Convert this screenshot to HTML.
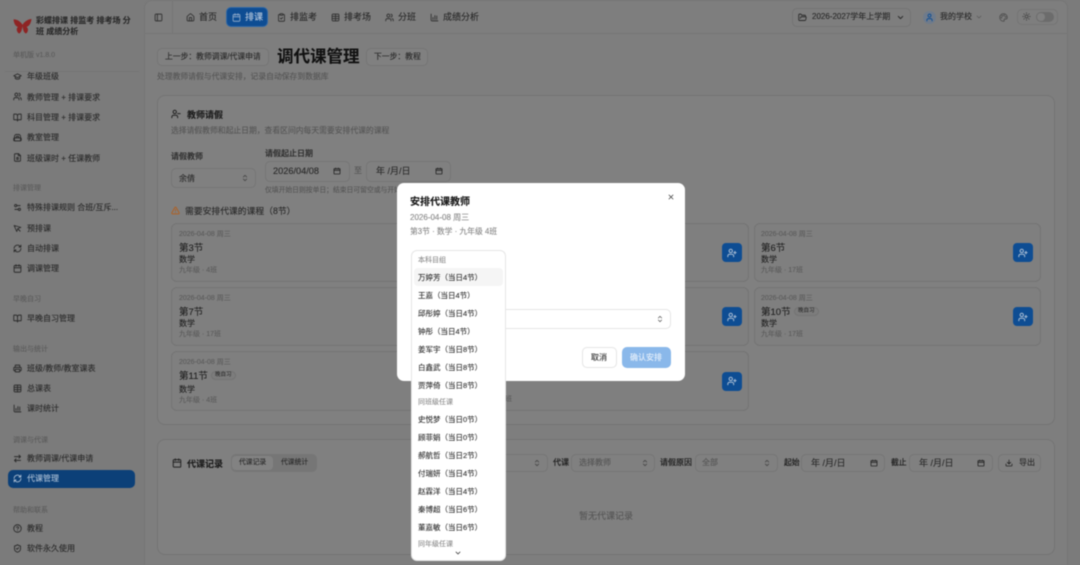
<!DOCTYPE html>
<html lang="zh-CN"><head><meta charset="utf-8"><title>调代课管理</title>
<style>
html,body{margin:0;padding:0;width:1080px;height:565px;overflow:hidden;background:#7b7b7b}
body{font-family:"Liberation Sans","Noto Sans CJK SC",sans-serif;position:relative;color:#2c2c2c}
#r{position:absolute;left:0;top:0;width:1080px;height:565px;overflow:hidden;filter:blur(.45px)}
.t{position:absolute;white-space:nowrap;line-height:12px;height:12px;font-size:8px;margin-top:1px;-webkit-text-stroke:.12px currentColor}
.b{position:absolute;box-sizing:border-box}
svg.i{position:absolute;fill:none;stroke:currentColor;stroke-width:2.4;stroke-linecap:round;stroke-linejoin:round;overflow:visible}
.s{color:#2a2a2a}.m{color:#565656}.l{color:#5c5c5c;font-size:7px}
.side{color:#2b2b2b}
.ctl{border:1px solid #757575;border-radius:5px;background:#808080}
.card{border:1px solid #747474;border-radius:6px;background:#7f7f7f}
.asg{background:#0e4d93;border-radius:4px;width:20px;height:19px;color:#a9bdd4}
.bd{border:1px solid #737373;background:#7c7c7c;border-radius:5px;font-size:5.500px;line-height:7px;height:7px;padding:0 3px;color:#222;position:absolute;white-space:nowrap;box-sizing:content-box}
.di{font-size:7.500px;color:#333;left:418px}
.dl{font-size:7px;color:#8f8f8f;left:418px}
</style></head><body>
<svg width="0" height="0" style="position:absolute"><defs>
<symbol id="pn" viewBox="0 0 24 24"><rect x="3" y="3" width="18" height="18" rx="2"/><path d="M9 3v18"/></symbol>
<symbol id="hm" viewBox="0 0 24 24"><path d="M15 21v-8a1 1 0 0 0-1-1h-4a1 1 0 0 0-1 1v8"/><path d="M3 10a2 2 0 0 1 .7-1.500l7-6a2 2 0 0 1 2.600 0l7 6a2 2 0 0 1 .7 1.500v9a2 2 0 0 1-2 2H5a2 2 0 0 1-2-2z"/></symbol>
<symbol id="cal" viewBox="0 0 24 24"><path d="M8 2v4M16 2v4"/><rect x="3" y="4" width="18" height="18" rx="2"/><path d="M3 10h18"/></symbol>
<symbol id="cl" viewBox="0 0 24 24"><rect x="8" y="2" width="8" height="4" rx="1"/><path d="M16 4h2a2 2 0 0 1 2 2v14a2 2 0 0 1-2 2H6a2 2 0 0 1-2-2V6a2 2 0 0 1 2-2h2"/><path d="m9 14 2 2 4-4"/></symbol>
<symbol id="tb" viewBox="0 0 24 24"><rect x="3" y="3" width="18" height="18" rx="2"/><path d="M3 9h18M3 15h18M12 3v18"/></symbol>
<symbol id="us" viewBox="0 0 24 24"><path d="M16 21v-2a4 4 0 0 0-4-4H6a4 4 0 0 0-4 4v2"/><circle cx="9" cy="7" r="4"/><path d="M22 21v-2a4 4 0 0 0-3-3.900M16 3.100a4 4 0 0 1 0 7.800"/></symbol>
<symbol id="ch" viewBox="0 0 24 24"><path d="M3 3v16a2 2 0 0 0 2 2h16"/><path d="M8 17v-5M13 17V7M18 17v-9"/></symbol>
<symbol id="fd" viewBox="0 0 24 24"><path d="m6 14 1.500-2.900A2 2 0 0 1 9.200 10H20a2 2 0 0 1 1.900 2.500l-1.500 6A2 2 0 0 1 18.500 20H4a2 2 0 0 1-2-2V5a2 2 0 0 1 2-2h4l2 3h8a2 2 0 0 1 2 2v2"/></symbol>
<symbol id="dn" viewBox="0 0 24 24"><path d="m6 9 6 6 6-6"/></symbol>
<symbol id="ud" viewBox="0 0 24 24"><path d="m7 15 5 5 5-5M7 9l5-5 5 5"/></symbol>
<symbol id="u1" viewBox="0 0 24 24"><path d="M19 21v-2a4 4 0 0 0-4-4H9a4 4 0 0 0-4 4v2"/><circle cx="12" cy="7" r="4"/></symbol>
<symbol id="pl" viewBox="0 0 24 24"><path d="M12 22a10 10 0 1 1 10-10c0 2.800-2.200 4-4 4h-2.500a2 2 0 0 0-1.500 3.300c.6.800 0 2.700-2 2.700z"/><circle cx="13.500" cy="6.500" r="1"/><circle cx="17.500" cy="10.500" r="1"/><circle cx="6.500" cy="12.500" r="1"/><circle cx="8.500" cy="7.500" r="1"/></symbol>
<symbol id="sn" viewBox="0 0 24 24"><circle cx="12" cy="12" r="4"/><path d="M12 2v2M12 20v2M4.900 4.900l1.400 1.400M17.700 17.700l1.400 1.400M2 12h2M20 12h2M6.300 17.700l-1.400 1.400M19.100 4.900l-1.400 1.400"/></symbol>
<symbol id="gr" viewBox="0 0 24 24"><path d="M22 10 12 5 2 10l10 5 10-5z"/><path d="M6 12v5c3 3 9 3 12 0v-5"/></symbol>
<symbol id="bk" viewBox="0 0 24 24"><path d="M12 7v14"/><path d="M3 18a1 1 0 0 1-1-1V4a1 1 0 0 1 1-1h5a4 4 0 0 1 4 4 4 4 0 0 1 4-4h5a1 1 0 0 1 1 1v13a1 1 0 0 1-1 1h-6a3 3 0 0 0-3 3 3 3 0 0 0-3-3z"/></symbol>
<symbol id="sc" viewBox="0 0 24 24"><path d="M4 19V9a5 5 0 0 1 5-5h6a5 5 0 0 1 5 5v10"/><rect x="2" y="13" width="20" height="8" rx="2"/><path d="M9 13V9h6v4"/></symbol>
<symbol id="fl" viewBox="0 0 24 24"><path d="M15 2H6a2 2 0 0 0-2 2v16a2 2 0 0 0 2 2h12a2 2 0 0 0 2-2V7z"/><path d="M14 2v5h6"/><path d="M10 12h4v5h-4z"/></symbol>
<symbol id="sl" viewBox="0 0 24 24"><path d="M14 17H5M19 7h-9"/><circle cx="17" cy="17" r="3"/><circle cx="7" cy="7" r="3"/></symbol>
<symbol id="pt" viewBox="0 0 24 24"><path d="M3 4l18 5-8 3-3 8z"/><path d="M13 13l6 6"/></symbol>
<symbol id="rf" viewBox="0 0 24 24"><path d="M3 12a9 9 0 0 1 15-6.700L21 8M21 3v5h-5M21 12a9 9 0 0 1-15 6.700L3 16M3 21v-5h5"/></symbol>
<symbol id="pr" viewBox="0 0 24 24"><path d="M6 18H4a2 2 0 0 1-2-2v-5a2 2 0 0 1 2-2h16a2 2 0 0 1 2 2v5a2 2 0 0 1-2 2h-2"/><path d="M6 9V3h12v6"/><rect x="6" y="14" width="12" height="7"/></symbol>
<symbol id="ar" viewBox="0 0 24 24"><path d="m16 3 4 4-4 4M20 7H4M8 21l-4-4 4-4M4 17h16"/></symbol>
<symbol id="hp" viewBox="0 0 24 24"><circle cx="12" cy="12" r="10"/><path d="M9.100 9a3 3 0 0 1 5.800 1c0 2-3 3-3 3M12 17h.01"/></symbol>
<symbol id="sd" viewBox="0 0 24 24"><path d="M20 13c0 5-3.500 7.500-7.700 9a1 1 0 0 1-.6 0C7.500 20.500 4 18 4 13V6a1 1 0 0 1 1-1c2 0 4.500-1.200 6.200-2.700a1.200 1.200 0 0 1 1.600 0C14.500 3.800 17 5 19 5a1 1 0 0 1 1 1z"/><path d="m9 12 2 2 4-4"/></symbol>
<symbol id="ua" viewBox="0 0 24 24"><path d="M16 21v-2a4 4 0 0 0-4-4H6a4 4 0 0 0-4 4v2"/><circle cx="9" cy="7" r="4"/><path d="M19 8v6M22 11h-6"/></symbol>
<symbol id="um" viewBox="0 0 24 24"><path d="M16 21v-2a4 4 0 0 0-4-4H6a4 4 0 0 0-4 4v2"/><circle cx="9" cy="7" r="4"/><path d="M22 11h-6"/></symbol>
<symbol id="wr" viewBox="0 0 24 24"><path d="m21.700 18-8-14a2 2 0 0 0-3.500 0l-8 14A2 2 0 0 0 4 21h16a2 2 0 0 0 1.700-3z"/><path d="M12 9v4M12 17h.01"/></symbol>
<symbol id="dt" viewBox="0 0 24 24"><rect x="3" y="5" width="18" height="16" rx="1"/><path d="M3 10h18M8 3v3M16 3v3"/></symbol>
<symbol id="ex" viewBox="0 0 24 24"><path d="M21 15v4a2 2 0 0 1-2 2H5a2 2 0 0 1-2-2v-4M7 10l5 5 5-5M12 15V3"/></symbol>
<symbol id="x" viewBox="0 0 24 24"><path d="M18 6 6 18M6 6l12 12"/></symbol>
</defs></svg>
<div id="r">

<!-- main surface -->
<div class="b" style="left:144px;top:0;width:924px;height:565px;background:#7e7e7e;border:1px solid #767676;border-top-right-radius:8px;border-top-left-radius:8px;border-bottom:0"></div>
<div class="b" style="left:145px;top:33px;width:922px;height:1px;background:#767676"></div>
<div class="b" style="left:172px;top:1px;width:1px;height:32px;background:#767676"></div>

<!-- sidebar -->
<svg style="position:absolute;left:13px;top:18px" width="19" height="16" viewBox="0 0 19 16"><path d="M9 6C7 3 3 1 .5 1.500 1 5 2 8 5 9 3 10 3.500 14 6 15.500 8 15 9 12 9.500 8 10 12 11 15 13 15.500 15.500 14 15.500 10 13.500 9 16.500 8 18 5 18.500 1 16 1 12 3 10 6 9.500 7 9.500 7 9 6z" fill="#8e2424"/></svg>
<div class="t" style="left:36px;top:14px;font-weight:700;font-size:8px;color:#2a2a2a">彩蝶排课 排监考 排考场 分</div>
<div class="t" style="left:36px;top:25px;font-weight:700;font-size:8px;color:#2a2a2a">班 成绩分析</div>
<div class="t l" style="left:13px;top:49px">单机版 v1.8.0</div>
<div class="b" style="left:5px;top:71px;width:134px;height:1px;background:#757575"></div>

<svg class="i side" style="left:13px;top:72px" width="9" height="9"><use href="#gr"/></svg><div class="t side" style="left:27px;top:70px">年级班级</div>
<svg class="i side" style="left:13px;top:92px" width="9" height="9"><use href="#us"/></svg><div class="t side" style="left:27px;top:91px">教师管理 + 排课要求</div>
<svg class="i side" style="left:13px;top:113px" width="9" height="9"><use href="#bk"/></svg><div class="t side" style="left:27px;top:111px">科目管理 + 排课要求</div>
<svg class="i side" style="left:13px;top:133px" width="9" height="9"><use href="#sc"/></svg><div class="t side" style="left:27px;top:131px">教室管理</div>
<svg class="i side" style="left:13px;top:153px" width="9" height="9"><use href="#fl"/></svg><div class="t side" style="left:27px;top:152px">班级课时 + 任课教师</div>
<div class="t l" style="left:13px;top:182px">排课管理</div>
<svg class="i side" style="left:13px;top:203px" width="9" height="9"><use href="#sl"/></svg><div class="t side" style="left:27px;top:201px">特殊排课规则 合班/互斥...</div>
<svg class="i side" style="left:13px;top:224px" width="9" height="9"><use href="#pt"/></svg><div class="t side" style="left:27px;top:222px">预排课</div>
<svg class="i side" style="left:13px;top:244px" width="9" height="9"><use href="#rf"/></svg><div class="t side" style="left:27px;top:242px">自动排课</div>
<svg class="i side" style="left:13px;top:264px" width="9" height="9"><use href="#cal"/></svg><div class="t side" style="left:27px;top:262px">调课管理</div>
<div class="t l" style="left:13px;top:293px">早晚自习</div>
<svg class="i side" style="left:13px;top:314px" width="9" height="9"><use href="#bk"/></svg><div class="t side" style="left:27px;top:312px">早晚自习管理</div>
<div class="t l" style="left:13px;top:343px">输出与统计</div>
<svg class="i side" style="left:13px;top:364px" width="9" height="9"><use href="#pr"/></svg><div class="t side" style="left:27px;top:362px">班级/教师/教室课表</div>
<svg class="i side" style="left:13px;top:384px" width="9" height="9"><use href="#tb"/></svg><div class="t side" style="left:27px;top:382px">总课表</div>
<svg class="i side" style="left:13px;top:404px" width="9" height="9"><use href="#ch"/></svg><div class="t side" style="left:27px;top:402px">课时统计</div>
<div class="t l" style="left:13px;top:434px">调课与代课</div>
<svg class="i side" style="left:13px;top:454px" width="9" height="9"><use href="#ar"/></svg><div class="t side" style="left:27px;top:452px">教师调课/代课申请</div>
<div class="b" style="left:8px;top:470px;width:127px;height:18px;background:#0c4078;border-radius:5px"></div>
<svg class="i" style="left:13px;top:474px;color:#a5b9d0" width="9" height="9"><use href="#rf"/></svg><div class="t" style="left:27px;top:472px;color:#a9bdd4">代课管理</div>
<div class="t l" style="left:13px;top:504px">帮助和联系</div>
<svg class="i side" style="left:13px;top:524px" width="9" height="9"><use href="#hp"/></svg><div class="t side" style="left:27px;top:522px">教程</div>
<svg class="i side" style="left:13px;top:544px" width="9" height="9"><use href="#sd"/></svg><div class="t side" style="left:27px;top:542px">软件永久使用</div>

<!-- top nav -->
<svg class="i" style="left:154px;top:13px;color:#333" width="9" height="9"><use href="#pn"/></svg>
<svg class="i" style="left:186px;top:13px;color:#333" width="9" height="9"><use href="#hm"/></svg><div class="t s" style="left:199px;top:10px;font-size:9px">首页</div>
<div class="b" style="left:226px;top:7px;width:42px;height:20px;background:#0e4d93;border:1px solid #3068a6;border-radius:5px"></div>
<svg class="i" style="left:232px;top:13px;color:#8ba7c8" width="9" height="9"><use href="#cal"/></svg><div class="t" style="left:245px;top:10px;font-size:9px;color:#b3c5da">排课</div>
<svg class="i" style="left:277px;top:13px;color:#333" width="9" height="9"><use href="#cl"/></svg><div class="t s" style="left:290px;top:10px;font-size:9px">排监考</div>
<svg class="i" style="left:331px;top:13px;color:#333" width="9" height="9"><use href="#tb"/></svg><div class="t s" style="left:344px;top:10px;font-size:9px">排考场</div>
<svg class="i" style="left:385px;top:13px;color:#333" width="9" height="9"><use href="#us"/></svg><div class="t s" style="left:398px;top:10px;font-size:9px">分班</div>
<svg class="i" style="left:430px;top:13px;color:#333" width="9" height="9"><use href="#ch"/></svg><div class="t s" style="left:443px;top:10px;font-size:9px">成绩分析</div>

<div class="b" style="left:792px;top:8px;width:119px;height:19px;border:1px solid #747474;border-radius:5px"></div>
<svg class="i" style="left:798px;top:13px;color:#2a2a2a" width="9" height="9"><use href="#fd"/></svg><div class="t s" style="left:812px;top:10px;font-size:8px">2026-2027学年上学期</div>
<svg class="i" style="left:896px;top:13px;color:#2a2a2a" width="9" height="9"><use href="#dn"/></svg>
<div class="b" style="left:923px;top:11px;width:13px;height:13px;border-radius:50%;background:#6f7b8b"></div>
<svg class="i" style="left:925px;top:13px;color:#0e4d93" width="9" height="9"><use href="#u1"/></svg>
<div class="t s" style="left:940px;top:10px">我的学校</div>
<svg class="i" style="left:975px;top:13px;color:#5c5c5c" width="8" height="8"><use href="#dn"/></svg>
<svg class="i" style="left:999px;top:13px;color:#4f4f4f" width="9" height="9"><use href="#pl"/></svg>
<div class="b" style="left:1017px;top:9px;width:41px;height:16px;border:1px solid #757575;border-radius:5px"></div>
<svg class="i" style="left:1022px;top:12px;color:#4a4a4a" width="9" height="9"><use href="#sn"/></svg>
<div class="b" style="left:1036px;top:12px;width:18px;height:10px;border-radius:5px;background:#6c6c6c"></div>
<div class="b" style="left:1037px;top:13px;width:8px;height:8px;border-radius:50%;background:#808080"></div>

<!-- page head -->
<div class="b ctl" style="left:157px;top:48px;width:112px;height:18px"></div>
<div class="t s" style="left:165px;top:50px;font-size:7.800px">上一步：教师调课/代课申请</div>
<div class="t" style="left:277px;top:46px;height:20px;line-height:20px;font-size:16.500px;font-weight:700;color:#111">调代课管理</div>
<div class="b ctl" style="left:366px;top:48px;width:62px;height:18px"></div>
<div class="t s" style="left:374px;top:50px;font-size:7.800px">下一步：教程</div>
<div class="t m" style="left:157px;top:70px;font-size:7.800px">处理教师请假与代课安排，记录自动保存到数据库</div>

<!-- panel 1 -->
<div class="b" style="left:157px;top:95px;width:898px;height:330px;background:#808080;border:1px solid #747474;border-radius:8px"></div>
<svg class="i" style="left:171px;top:109px;color:#222" width="10" height="10"><use href="#um"/></svg>
<div class="t" style="left:187px;top:108px;font-size:9px;font-weight:700;color:#1c1c1c">教师请假</div>
<div class="t m" style="left:171px;top:124px;font-size:7.800px">选择请假教师和起止日期，查看区间内每天需要安排代课的课程</div>
<div class="t s" style="left:171px;top:150px;font-weight:500">请假教师</div>
<div class="b ctl" style="left:171px;top:168px;width:85px;height:20px"></div>
<div class="t s" style="left:179px;top:172px">余倩</div>
<svg class="i" style="left:241px;top:174px;color:#444" width="8" height="8"><use href="#ud"/></svg>
<div class="t s" style="left:265px;top:147px;font-weight:500">请假起止日期</div>
<div class="b ctl" style="left:265px;top:161px;width:85px;height:21px"></div>
<div class="t s" style="left:273px;top:164px;font-size:9.200px">2026/04/08</div>
<svg class="i" style="left:333px;top:167px;color:#222" width="8" height="8"><use href="#dt"/></svg>
<div class="t m" style="left:354px;top:164px">至</div>
<div class="b ctl" style="left:366px;top:161px;width:85px;height:21px"></div>
<div class="t s" style="left:376px;top:164px;font-size:9px">年 /月/日</div>
<svg class="i" style="left:435px;top:167px;color:#222" width="8" height="8"><use href="#dt"/></svg>
<div class="t m" style="left:265px;top:184px;font-size:6.800px">仅填开始日则按单日；结束日可留空或与开始日相同</div>
<svg class="i" style="left:171px;top:206px;color:#b05f20" width="9" height="9"><use href="#wr"/></svg>
<div class="t" style="left:185px;top:204px;font-size:8.800px;color:#2a2a2a">需要安排代课的课程（8节）</div>

<!-- cards -->
<div class="b card" style="left:171px;top:223px;width:287px;height:59px"></div>
<div class="b card" style="left:462px;top:223px;width:287px;height:59px"></div>
<div class="b card" style="left:754px;top:223px;width:287px;height:59px"></div>
<div class="b card" style="left:171px;top:287px;width:287px;height:59px"></div>
<div class="b card" style="left:462px;top:287px;width:287px;height:59px"></div>
<div class="b card" style="left:754px;top:287px;width:287px;height:59px"></div>
<div class="b card" style="left:171px;top:351px;width:287px;height:60px"></div>
<div class="b card" style="left:462px;top:351px;width:287px;height:60px"></div>

<div class="t l" style="left:179px;top:228px">2026-04-08 周三</div>
<div class="t" style="left:179px;top:242px;font-size:9.500px;color:#222">第3节</div>
<div class="t" style="left:179px;top:253px;color:#222">数学</div>
<div class="t l" style="left:179px;top:264px">九年级 · 4班</div>

<div class="t l" style="left:179px;top:292px">2026-04-08 周三</div>
<div class="t" style="left:179px;top:306px;font-size:9.500px;color:#222">第7节</div>
<div class="t" style="left:179px;top:317px;color:#222">数学</div>
<div class="t l" style="left:179px;top:328px">九年级 · 17班</div>

<div class="t l" style="left:179px;top:356px">2026-04-08 周三</div>
<div class="t" style="left:179px;top:370px;font-size:9.500px;color:#222">第11节</div>
<div class="bd" style="left:211px;top:371px">晚自习</div>
<div class="t" style="left:179px;top:383px;color:#222">数学</div>
<div class="t l" style="left:179px;top:394px">九年级 · 4班</div>

<div class="t l" style="left:470px;top:393px">九年级 · 17班</div>

<div class="t l" style="left:761px;top:228px">2026-04-08 周三</div>
<div class="t" style="left:761px;top:242px;font-size:9.500px;color:#222">第6节</div>
<div class="t" style="left:761px;top:253px;color:#222">数学</div>
<div class="t l" style="left:761px;top:264px">九年级 · 17班</div>

<div class="t l" style="left:761px;top:292px">2026-04-08 周三</div>
<div class="t" style="left:761px;top:306px;font-size:9.500px;color:#222">第10节</div>
<div class="bd" style="left:794px;top:307px">晚自习</div>
<div class="t" style="left:761px;top:317px;color:#222">数学</div>
<div class="t l" style="left:761px;top:328px">九年级 · 17班</div>

<div class="b asg" style="left:722px;top:243px"></div><svg class="i" style="left:727px;top:248px;color:#a9bdd4" width="10" height="10"><use href="#ua"/></svg>
<div class="b asg" style="left:1013px;top:243px"></div><svg class="i" style="left:1018px;top:248px;color:#a9bdd4" width="10" height="10"><use href="#ua"/></svg>
<div class="b asg" style="left:722px;top:307px"></div><svg class="i" style="left:727px;top:312px;color:#a9bdd4" width="10" height="10"><use href="#ua"/></svg>
<div class="b asg" style="left:1013px;top:307px"></div><svg class="i" style="left:1018px;top:312px;color:#a9bdd4" width="10" height="10"><use href="#ua"/></svg>
<div class="b asg" style="left:722px;top:372px"></div><svg class="i" style="left:727px;top:376px;color:#a9bdd4" width="10" height="10"><use href="#ua"/></svg>

<!-- panel 2 -->
<div class="b" style="left:157px;top:439px;width:898px;height:116px;background:#808080;border:1px solid #747474;border-radius:8px"></div>
<svg class="i" style="left:172px;top:458px;color:#222" width="10" height="10"><use href="#cal"/></svg>
<div class="t" style="left:187px;top:457px;font-size:9px;font-weight:700;color:#1c1c1c">代课记录</div>
<div class="b" style="left:231px;top:454px;width:86px;height:18px;border-radius:5px;background:#767676"></div>
<div class="b" style="left:232px;top:456px;width:41px;height:14px;border-radius:4px;background:#828282"></div>
<div class="t s" style="left:239px;top:456px;font-size:6.800px">代课记录</div>
<div class="t s" style="left:281px;top:456px;font-size:6.800px">代课统计</div>

<div class="b ctl" style="left:440px;top:454px;width:108px;height:18px"></div>
<svg class="i" style="left:533px;top:459px;color:#444" width="8" height="8"><use href="#ud"/></svg>
<div class="t" style="left:553px;top:456px;font-size:8px;font-weight:500;color:#222">代课</div>
<div class="b ctl" style="left:571px;top:454px;width:84px;height:18px"></div>
<div class="t m" style="left:579px;top:456px;font-size:8px">选择教师</div>
<svg class="i" style="left:641px;top:459px;color:#444" width="8" height="8"><use href="#ud"/></svg>
<div class="t" style="left:660px;top:456px;font-size:8px;font-weight:500;color:#222">请假原因</div>
<div class="b ctl" style="left:695px;top:454px;width:83px;height:18px"></div>
<div class="t m" style="left:702px;top:456px;font-size:8px">全部</div>
<svg class="i" style="left:763px;top:459px;color:#444" width="8" height="8"><use href="#ud"/></svg>
<div class="t" style="left:784px;top:456px;font-size:7.800px;font-weight:500;color:#222">起始</div>
<div class="b ctl" style="left:801px;top:454px;width:84px;height:18px"></div>
<div class="t s" style="left:811px;top:456px;font-size:9px">年 /月/日</div>
<svg class="i" style="left:870px;top:459px;color:#222" width="8" height="8"><use href="#dt"/></svg>
<div class="t" style="left:891px;top:456px;font-size:7.800px;font-weight:500;color:#222">截止</div>
<div class="b ctl" style="left:909px;top:454px;width:84px;height:18px"></div>
<div class="t s" style="left:919px;top:456px;font-size:9px">年 /月/日</div>
<svg class="i" style="left:977px;top:459px;color:#222" width="8" height="8"><use href="#dt"/></svg>
<div class="b ctl" style="left:998px;top:454px;width:43px;height:18px"></div>
<svg class="i" style="left:1005px;top:459px;color:#222" width="8" height="8"><use href="#ex"/></svg>
<div class="t s" style="left:1019px;top:456px">导出</div>
<div class="t m" style="left:579px;top:509px;font-size:9px">暂无代课记录</div>

<!-- modal -->
<div class="b" style="left:397px;top:183px;width:288px;height:198px;background:#fff;border-radius:7px"></div>
<div class="t" style="left:410px;top:196px;font-size:10px;font-weight:700;color:#1a1a1a">安排代课教师</div>
<div class="t" style="left:410px;top:211px;color:#8a8a8a">2026-04-08 周三</div>
<div class="t" style="left:410px;top:225px;color:#8a8a8a;font-size:7.800px">第3节 · 数学 · 九年级 4班</div>
<svg class="i" style="left:667px;top:193px;color:#444" width="8" height="8"><use href="#x"/></svg>
<div class="b" style="left:411px;top:309px;width:260px;height:20px;border:1px solid #e5e5e5;border-radius:5px;background:#fff"></div>
<svg class="i" style="left:656px;top:315px;color:#666" width="8" height="8"><use href="#ud"/></svg>
<div class="b" style="left:582px;top:347px;width:35px;height:21px;border:1px solid #e5e5e5;border-radius:5px;background:#fff"></div>
<div class="t" style="left:591px;top:351px;color:#333">取消</div>
<div class="b" style="left:622px;top:347px;width:49px;height:21px;border-radius:5px;background:#8ab8ea"></div>
<div class="t" style="left:630px;top:351px;color:#e6f0fb">确认安排</div>

<!-- dropdown -->
<div class="b" style="left:411px;top:250px;width:95px;height:311px;background:#fff;border:1px solid #e6e6e6;border-radius:6px"></div>
<div class="b" style="left:414px;top:268px;width:89px;height:18px;background:#f5f5f5;border-radius:4px"></div>
<div class="t dl" style="top:254px">本科目组</div>
<div class="t di" style="top:271px">万婷芳（当日4节）</div>
<div class="t di" style="top:289px">王嘉（当日4节）</div>
<div class="t di" style="top:307px">邱彤婷（当日4节）</div>
<div class="t di" style="top:325px">钟彤（当日4节）</div>
<div class="t di" style="top:343px">姜军宇（当日8节）</div>
<div class="t di" style="top:361px">白鑫武（当日8节）</div>
<div class="t di" style="top:379px">贾萍倚（当日8节）</div>
<div class="t dl" style="top:396px">同班级任课</div>
<div class="t di" style="top:413px">史悦梦（当日0节）</div>
<div class="t di" style="top:431px">顾菲娟（当日0节）</div>
<div class="t di" style="top:449px">郝航哲（当日2节）</div>
<div class="t di" style="top:467px">付瑞妍（当日4节）</div>
<div class="t di" style="top:485px">赵霖洋（当日4节）</div>
<div class="t di" style="top:503px">秦博超（当日6节）</div>
<div class="t di" style="top:521px">董嘉敏（当日6节）</div>
<div class="t dl" style="top:538px">同年级任课</div>
<svg class="i" style="left:454px;top:549px;color:#333" width="8" height="8"><use href="#dn"/></svg>
</div>
</body></html>
